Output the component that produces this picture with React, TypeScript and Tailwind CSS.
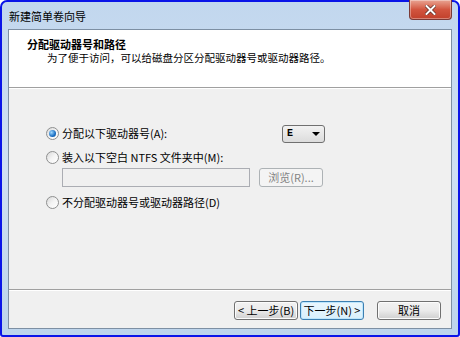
import React from "react";

const font = { fontFamily: '"Noto Sans CJK SC", "Liberation Sans", sans-serif' };

function Radio({ checked }: { checked?: boolean }) {
  return (
    <span className="relative inline-flex h-[13px] w-[13px] shrink-0 items-center justify-center rounded-full border border-[#8e8f8f] bg-gradient-to-br from-[#d8d8d8] via-[#f4f4f4] to-white">
      {checked && (
        <span className="h-[7px] w-[7px] rounded-full bg-[radial-gradient(circle_at_35%_35%,#9fd8ff,#1a6fc4_60%,#0b4a8c)]" />
      )}
    </span>
  );
}

function Btn({ children, focused, disabled, className = "" }: { children: React.ReactNode; focused?: boolean; disabled?: boolean; className?: string }) {
  return (
    <div
      className={
        "flex h-[19px] items-center justify-center rounded-[3px] border text-[11px] leading-none " +
        (focused
          ? "border-[#3c7fb1] bg-gradient-to-b from-[#eaf6fd] to-[#d9f0fc] text-black shadow-[inset_0_0_0_1px_#bde6fd] "
          : disabled
          ? "border-[#adb2b5] bg-[#f4f4f4] text-[#838383] "
          : "border-[#707070] bg-gradient-to-b from-[#f2f2f2] via-[#ebebeb] to-[#cfcfcf] text-black shadow-[inset_0_0_0_1px_#fcfcfc] ") +
        className
      }
    >
      {children}
    </div>
  );
}

export default function App() {
  return (
    <div className="h-[337px] w-[460px] overflow-hidden bg-white" style={font}>
      <div className="h-full w-full rounded-t-[7px] rounded-b-[3px] border-2 border-[#0a14e8] bg-gradient-to-b from-[#c2d7ee] via-[#cfe0f3] to-[#bcd4ec] p-0">
        <div className="flex h-full flex-col">
          {/* title bar */}
          <div className="relative flex h-[27px] shrink-0 items-center pl-[7px] pt-[2px]">
            <span className="text-[11px] text-black">新建简单卷向导</span>
            <div className="absolute right-[6px] top-[-2px] flex h-[20px] w-[43px] items-center justify-center rounded-b-[4px] border border-t-0 border-[#7b3a36] bg-gradient-to-b from-[#e8a493] via-[#d2553f] to-[#c1402b] shadow-[inset_0_0_0_1px_rgba(255,255,255,0.35)]">
              <svg width="11" height="10" viewBox="0 0 11 10">
                <path d="M1.5 1 L9.5 9 M9.5 1 L1.5 9" stroke="#5a2a22" strokeWidth="3.4" strokeLinecap="square" />
                <path d="M1.5 1 L9.5 9 M9.5 1 L1.5 9" stroke="#ffffff" strokeWidth="2" strokeLinecap="square" />
              </svg>
            </div>
          </div>
          {/* client */}
          <div className="mx-[6px] mb-[6px] flex flex-1 flex-col border border-[#7d8fa3] bg-[#f0f0f0]">
            <div className="h-[58px] shrink-0 border-b border-[#a0a0a0] bg-white pl-[18px] pt-[7px] shadow-[0_1px_0_#ffffff]">
              <div className="text-[11px] font-bold leading-[14px] text-black">分配驱动器号和路径</div>
              <div className="ml-[20px] text-[10.5px] leading-[14px] text-black">
                为了便于访问，可以给磁盘分区分配驱动器号或驱动器路径。
              </div>
            </div>
            <div className="flex flex-1 flex-col text-[11px] text-black">
              <div className="ml-[37px] mt-[37px] flex h-[17px] items-center">
                <Radio checked />
                <span className="ml-[3px] w-[220px]">分配以下驱动器号(A):</span>
                <div className="ml-[0px] flex h-[18px] w-[43px] items-center justify-between rounded-[3px] border border-[#707070] bg-gradient-to-b from-[#f2f2f2] to-[#dcdcdc] px-[4px]">
                  <span className="font-bold" style={{ fontFamily: '"Liberation Mono", monospace', fontSize: 10 }}>E</span>
                  <svg width="8" height="4" viewBox="0 0 8 4"><path d="M0 0 H8 L4 4 Z" fill="#000" /></svg>
                </div>
              </div>
              <div className="ml-[37px] mt-[7px] flex h-[17px] items-center">
                <Radio />
                <span className="ml-[3px]">装入以下空白 NTFS 文件夹中(M):</span>
              </div>
              <div className="ml-[53px] mt-[2px] flex items-center">
                <div className="h-[19px] w-[188px] border border-[#abadb3] bg-[#f0f0f0]" />
                <Btn disabled className="ml-[9px] w-[64px]">浏览(R)...</Btn>
              </div>
              <div className="ml-[37px] mt-[7px] flex h-[17px] items-center">
                <Radio />
                <span className="ml-[3px]">不分配驱动器号或驱动器路径(D)</span>
              </div>
              <div className="flex-1" />
              <div className="h-[1px] bg-[#a0a0a0]" />
              <div className="h-[1px] bg-white" />
              <div className="flex h-[37px] items-start pr-[10px] pt-[10px]">
                <div className="flex-1" />
                <Btn className="w-[64px]">&lt; 上一步(B)</Btn>
                <Btn focused className="ml-[2px] w-[64px]">下一步(N) &gt;</Btn>
                <Btn className="ml-[13px] w-[64px]">取消</Btn>
              </div>
            </div>
          </div>
        </div>
      </div>
    </div>
  );
}
